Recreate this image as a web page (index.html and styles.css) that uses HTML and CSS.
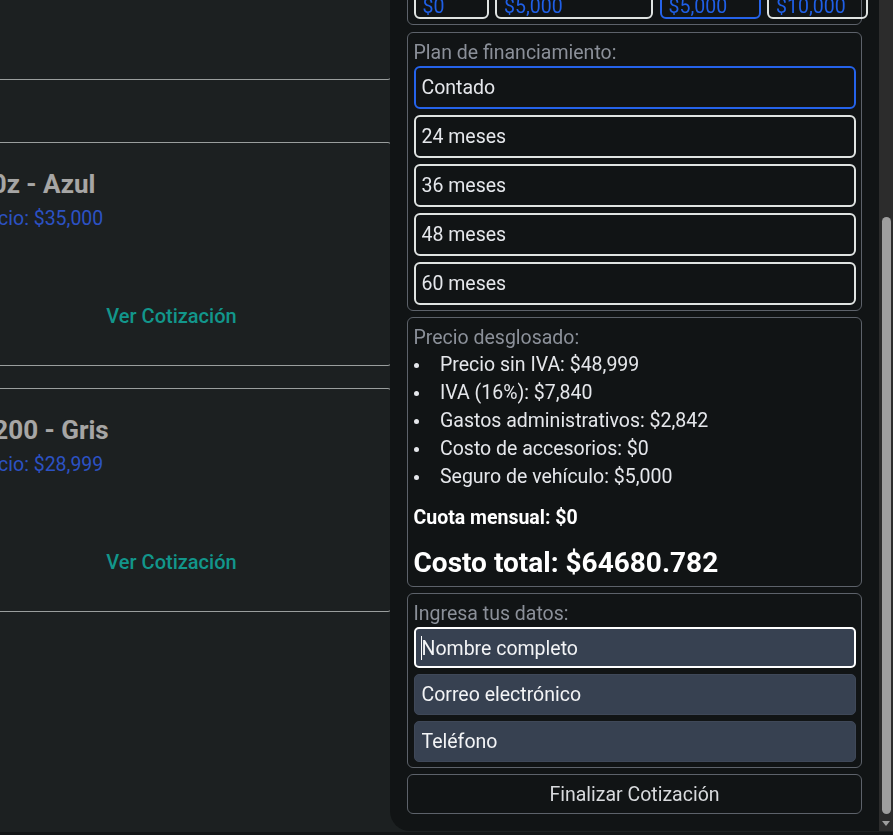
FILE: index.html
```html
<!DOCTYPE html>
<html lang="es">
<head>
<meta charset="utf-8">
<title>Cotizador</title>
<link rel="stylesheet" href="styles.css">
</head>
<body>
<main class="page">
  <div class="catalog">
    <div class="filters"></div>
    <article class="car-card">
      <h3 class="car-title">M0z - Azul</h3>
      <p class="car-price">Precio: $35,000</p>
      <button class="quote-link" type="button">Ver Cotización</button>
    </article>
    <article class="car-card">
      <h3 class="car-title">IX200 - Gris</h3>
      <p class="car-price">Precio: $28,999</p>
      <button class="quote-link" type="button">Ver Cotización</button>
    </article>
  </div>
</main>

<aside class="panel">
  <div class="panel-scroll">
    <div class="panel-inner">
      <header class="panel-head">
        <h2 class="panel-title">Cotización</h2>
        <p class="panel-sub">Modelo seleccionado: IX200 - Gris</p>
        <p class="panel-sub">Precio base: $48,999</p>
      </header>

      <section class="box box-down">
        <div class="box-label">Enganche:</div>
        <div class="down-row">
          <button class="down-opt" type="button">$0</button>
          <button class="down-opt" type="button">$5,000</button>
          <button class="down-opt is-active" type="button">$5,000</button>
          <button class="down-opt" type="button">$10,000</button>
        </div>
      </section>

      <section class="box">
        <div class="box-label">Plan de financiamiento:</div>
        <div class="plan-list">
          <button class="plan-opt is-active" type="button">Contado</button>
          <button class="plan-opt" type="button">24 meses</button>
          <button class="plan-opt" type="button">36 meses</button>
          <button class="plan-opt" type="button">48 meses</button>
          <button class="plan-opt" type="button">60 meses</button>
        </div>
      </section>

      <section class="box box-breakdown">
        <div class="box-label">Precio desglosado:</div>
        <ul class="breakdown">
          <li>Precio sin IVA: $48,999</li>
          <li>IVA (16%): $7,840</li>
          <li>Gastos administrativos: $2,842</li>
          <li>Costo de accesorios: $0</li>
          <li>Seguro de vehículo: $5,000</li>
        </ul>
        <p class="monthly">Cuota mensual: $0</p>
        <p class="total">Costo total: $64680.782</p>
      </section>

      <section class="box">
        <div class="box-label">Ingresa tus datos:</div>
        <div class="fields">
          <div class="field-wrap is-focused"><input class="field" type="text" placeholder="Nombre completo"></div>
          <div class="field-wrap"><input class="field" type="email" placeholder="Correo electrónico"></div>
          <div class="field-wrap"><input class="field" type="tel" placeholder="Teléfono"></div>
        </div>
      </section>

      <button class="submit" type="button">Finalizar Cotización</button>
    </div>
  </div>
  <div class="scrollbar" aria-hidden="true">
    <div class="sb-btn sb-up"><span class="sb-arrow-up"></span></div>
    <div class="sb-thumb"></div>
    <div class="sb-btn sb-down"><span class="sb-arrow-down"></span></div>
  </div>
</aside>
</body>
</html>
```

FILE: styles.css
```css
* {
  box-sizing: border-box;
}

html,
body {
  margin: 0;
  height: 835px;
  overflow: hidden;
}

body {
  background: #121516;
  font-family: Roboto, "Liberation Sans", sans-serif;
}

button,
input {
  font-family: inherit;
}

/* ---------- left catalog ---------- */
.page {
  height: 832px;
  background: #1c2021;
  overflow: hidden;
}

.catalog {
  margin: -41px 0 0 -48px;
  width: 440px;
  display: flex;
  flex-direction: column;
  gap: 22px;
}

.filters {
  height: 121px;
  border: 1px solid #9a9e9e;
  border-radius: 4px;
  margin-bottom: 40px;
}

.car-card {
  height: 224px;
  border: 1px solid #9a9e9e;
  border-radius: 4px;
  padding: 24px 17px 0 16px;
  display: flex;
  flex-direction: column;
}

.car-title {
  margin: 0;
  font-size: 26px;
  line-height: 34px;
  font-weight: 700;
  color: #a6a6a6;
  text-shadow: 0 0 1px rgba(90, 70, 40, 0.6);
}

.car-price {
  margin: 4px 0 0;
  font-size: 19.5px;
  line-height: 28px;
  color: #2c52c4;
}

.quote-link {
  margin: auto 0 35px;
  align-self: center;
  padding: 0;
  border: 0;
  background: none;
  font-size: 20px;
  line-height: 28px;
  font-weight: 500;
  color: #12968b;
}

/* ---------- right panel ---------- */
.panel {
  position: fixed;
  top: -20px;
  right: 0;
  bottom: 4px;
  width: 503px;
  background: #111415;
  border-bottom-left-radius: 20px;
  display: flex;
}

.panel-scroll {
  flex: 1;
  min-width: 0;
  overflow-y: auto;
  scrollbar-width: none;
  display: flex;
  flex-direction: column-reverse;
}

.panel-inner {
  padding: 17px;
  display: flex;
  flex-direction: column;
  gap: 6px;
}

.panel-head {
  height: 269px;
  color: #e5e7eb;
}

.panel-title {
  margin: 0 0 12px;
  font-size: 28px;
  line-height: 40px;
}

.panel-sub {
  margin: 0;
  font-size: 19.5px;
  line-height: 28px;
  color: #9ca3af;
}

/* drawn scrollbar */
.scrollbar {
  width: 14px;
  flex: none;
  background: #2c2c2c;
  display: flex;
  flex-direction: column;
}

.sb-btn {
  height: 15px;
  flex: none;
  display: flex;
  justify-content: center;
}

.sb-up {
  align-items: flex-end;
  padding-bottom: 5px;
}

.sb-down {
  align-items: flex-start;
  padding-top: 5px;
}

.sb-arrow-up,
.sb-arrow-down {
  width: 0;
  height: 0;
  border-left: 4.5px solid transparent;
  border-right: 4.5px solid transparent;
}

.sb-arrow-up {
  border-bottom: 5px solid #9e9e9e;
}

.sb-arrow-down {
  border-top: 5px solid #9e9e9e;
}

.sb-thumb {
  flex: 1;
  margin: 222px 2px 2px 3px;
  background: #9e9e9e;
  border-radius: 5px;
}

.box {
  border: 1px solid #5d626a;
  border-radius: 6px;
  padding: 5.5px;
}

.box-label {
  font-size: 19.5px;
  line-height: 27px;
  color: #8b9099;
}

.box-down {
  margin-bottom: 1px;
}

.down-row {
  margin-top: 1px;
  display: grid;
  grid-template-columns: 75px 158px 101px 101px;
  gap: 6.5px;
}

.down-opt {
  padding: 10px 7px 0;
  border: 2px solid #e0e4e2;
  border-radius: 6px;
  background: transparent;
  text-align: left;
  font-size: 19.5px;
  line-height: 21px;
  color: #1f5fe6;
}

.down-opt.is-active {
  border-color: #2563eb;
}

.plan-list {
  margin-top: 0.5px;
  display: flex;
  flex-direction: column;
  gap: 6.5px;
}

.plan-opt {
  height: 42.5px;
  padding: 1px 6px 0;
  border: 2px solid #e0e4e2;
  border-radius: 6px;
  background: transparent;
  text-align: left;
  font-size: 19.5px;
  color: #e5e7eb;
}

.plan-opt.is-active {
  border-color: #2563eb;
}

.box-breakdown {
  padding-top: 6px;
  padding-bottom: 2.5px;
}

.breakdown {
  margin: 0;
  padding: 0;
  list-style: none;
}

.breakdown li {
  display: flex;
  align-items: center;
  font-size: 19.5px;
  line-height: 28px;
  color: #e5e7eb;
}

.breakdown li::before {
  content: "";
  flex: none;
  width: 5px;
  height: 5px;
  margin: 0 21px 0 0.5px;
  border-radius: 50%;
  background: #e5e7eb;
}

.monthly {
  margin: 13px 0 0;
  font-size: 19.5px;
  line-height: 27px;
  font-weight: 700;
  color: #ffffff;
}

.total {
  margin: 10.5px 0 0;
  font-size: 28px;
  line-height: 42px;
  font-weight: 700;
  color: #ffffff;
}

.fields {
  margin-top: 0.5px;
  display: flex;
  flex-direction: column;
  gap: 6.5px;
}

.field-wrap {
  position: relative;
}

.field {
  display: block;
  width: 100%;
  height: 40.5px;
  padding: 0 7px;
  border: 1px solid #3f4858;
  border-radius: 5px;
  background: #374151;
  font-size: 19.5px;
  color: #ffffff;
  outline: none;
}

.field::placeholder {
  color: #f3f4f6;
  opacity: 1;
}

.is-focused .field {
  border: 2px solid #ffffff;
  padding: 2px 6px 0;
}

.is-focused::after {
  content: "";
  position: absolute;
  left: 7px;
  top: 9px;
  width: 1px;
  height: 24px;
  background: #ffffff;
}

.submit {
  height: 40px;
  width: 100%;
  padding-top: 1px;
  border: 1px solid #5d626a;
  border-radius: 6px;
  background: transparent;
  font-size: 19.5px;
  color: #d8dadd;
}
```
